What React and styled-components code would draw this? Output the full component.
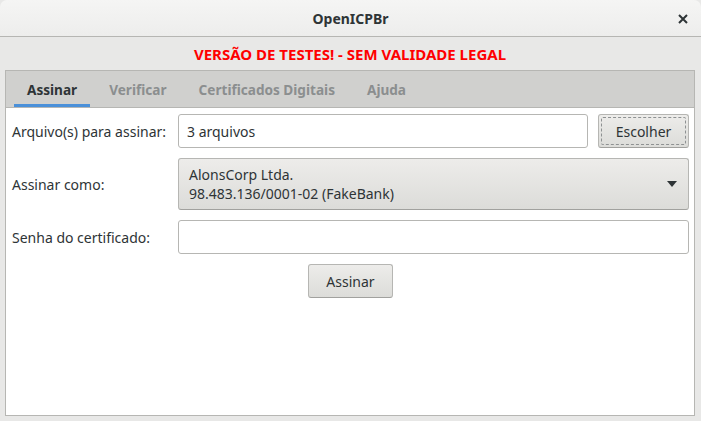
import React, { useState } from 'react';
import styled, { createGlobalStyle } from 'styled-components';

const GlobalStyle = createGlobalStyle`
  html, body {
    margin: 0;
    padding: 0;
    background: #e8e8e7;
  }
  body {
    font-family: "Noto Sans", "DejaVu Sans", sans-serif;
    font-size: 14px;
    color: #2e3436;
  }
`;

const tabs = ['Assinar', 'Verificar', 'Certificados Digitais', 'Ajuda'];

const App = () => {
  const [active, setActive] = useState(0);
  const [senha, setSenha] = useState('');

  return (
    <Window>
      <GlobalStyle />
      <TitleBar>
        <Title>OpenICPBr</Title>
        <CloseButton aria-label="Fechar">
          <svg width="10" height="10" viewBox="0 0 10 10">
            <path d="M1 1 L9 9 M9 1 L1 9" stroke="#2e3436" strokeWidth="2" />
          </svg>
        </CloseButton>
      </TitleBar>

      <Body>
        <Warning>VERSÃO DE TESTES! - SEM VALIDADE LEGAL</Warning>

        <Notebook>
          <TabBar>
            {tabs.map((t, i) => (
              <Tab key={t} $active={i === active} onClick={() => setActive(i)}>
                {t}
              </Tab>
            ))}
          </TabBar>

          <Page>
            <FormGrid>
              <Label>Arquivo(s) para assinar:</Label>
              <FileRow>
                <Entry type="text" value="3 arquivos" readOnly />
                <FocusButton>Escolher</FocusButton>
              </FileRow>

              <Label>Assinar como:</Label>
              <Combo>
                <ComboText>
                  <span>AlonsCorp Ltda.</span>
                  <span>98.483.136/0001-02 (FakeBank)</span>
                </ComboText>
                <svg width="10" height="6" viewBox="0 0 10 6">
                  <path d="M0 0 L10 0 L5 6 Z" fill="#2e3436" />
                </svg>
              </Combo>

              <Label>Senha do certificado:</Label>
              <Entry
                type="password"
                value={senha}
                onChange={(e) => setSenha(e.target.value)}
              />
            </FormGrid>

            <Actions>
              <Button $width="85px">Assinar</Button>
            </Actions>
          </Page>
        </Notebook>
      </Body>
    </Window>
  );
};

const Window = styled.div`
  width: 701px;
  height: 421px;
  display: flex;
  flex-direction: column;
  background: #e8e8e7;
  overflow: hidden;
`;

const TitleBar = styled.div`
  height: 36px;
  flex-shrink: 0;
  display: flex;
  align-items: center;
  justify-content: center;
  position: relative;
  background: linear-gradient(to bottom, #f5f5f4, #ededec);
  border-bottom: 1px solid #b6b6b3;
  border-radius: 7px 7px 0 0;
`;

const Title = styled.div`
  font-weight: bold;
  font-size: 14px;
  color: #2e3436;
`;

const CloseButton = styled.button`
  position: absolute;
  right: 12px;
  top: 13px;
  width: 12px;
  height: 12px;
  padding: 0;
  border: none;
  background: transparent;
  display: flex;
  align-items: center;
  justify-content: center;
`;

const Body = styled.div`
  flex: 1;
  display: flex;
  flex-direction: column;
  padding: 0 6px 5px 5px;
  min-height: 0;
`;

const Warning = styled.div`
  height: 33px;
  display: flex;
  align-items: center;
  justify-content: center;
  color: #ff0000;
  font-weight: bold;
  font-size: 15px;
`;

const Notebook = styled.div`
  flex: 1;
  display: flex;
  flex-direction: column;
  border: 1px solid #b6b6b3;
  background: #ffffff;
`;

const TabBar = styled.div`
  height: 36px;
  display: flex;
  gap: 6px;
  padding-left: 8px;
  background: #d0d0ce;
  border-bottom: 1px solid #b6b6b3;
`;

const Tab = styled.div`
  padding: 0 13px;
  display: flex;
  align-items: center;
  font-weight: bold;
  font-size: 13.6px;
  color: ${(p) => (p.$active ? '#2e3436' : '#8b8e8f')};
  box-shadow: ${(p) => (p.$active ? 'inset 0 -3px 0 #4a90d9' : 'none')};
  cursor: pointer;
`;

const Page = styled.div`
  flex: 1;
  display: flex;
  flex-direction: column;
  padding: 6px 5px 6px 6px;
`;

const FormGrid = styled.div`
  display: grid;
  grid-template-columns: 166px 1fr;
  row-gap: 10px;
  align-items: center;
`;

const Label = styled.div`
  font-size: 14px;
  color: #2e3436;
  white-space: nowrap;
`;

const FileRow = styled.div`
  display: flex;
  gap: 10px;
`;

const Entry = styled.input`
  flex: 1;
  min-width: 0;
  height: 34px;
  box-sizing: border-box;
  padding: 0 8px;
  border: 1px solid #b6b6b3;
  border-radius: 3px;
  background: #ffffff;
  font-family: inherit;
  font-size: 14px;
  color: #2e3436;
  outline: none;
`;

const Button = styled.button`
  width: ${(p) => p.$width || 'auto'};
  height: 34px;
  box-sizing: border-box;
  padding: 0 12px;
  border: 1px solid #b6b6b3;
  border-bottom-color: #a1a19e;
  border-radius: 3px;
  background: linear-gradient(to bottom, #edecea, #dcdcd9);
  font-family: inherit;
  font-size: 14px;
  color: #2e3436;
`;

const FocusButton = styled(Button)`
  width: 91px;
  flex-shrink: 0;
  position: relative;
  &::after {
    content: '';
    position: absolute;
    inset: 2px;
    border: 1px dashed #8e9192;
    border-radius: 2px;
  }
`;

const Combo = styled(Button)`
  height: 52px;
  display: flex;
  align-items: center;
  justify-content: space-between;
  padding: 0 11px 0 10px;
  text-align: left;
`;

const ComboText = styled.div`
  display: flex;
  flex-direction: column;
  line-height: 19px;
`;

const Actions = styled.div`
  display: flex;
  justify-content: center;
  padding-top: 10px;
`;

export default App;
